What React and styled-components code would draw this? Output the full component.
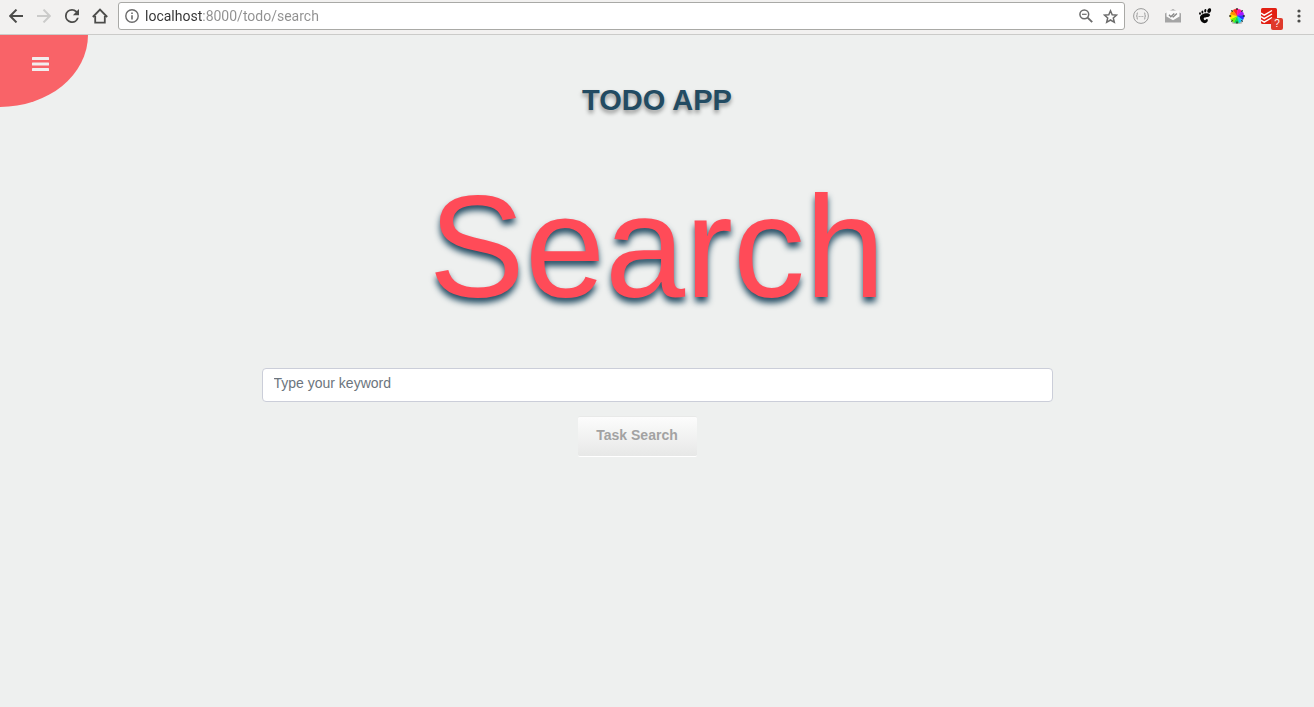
import React from "react";
import styled, { createGlobalStyle } from "styled-components";

const GlobalStyle = createGlobalStyle`
  *, *::before, *::after { box-sizing: border-box; }
  html, body { margin: 0; min-height: 100%; background: #eef0ef; }
  body { font-family: "Liberation Sans", Arial, sans-serif; font-size: 14px; color: #224b62; }
  button, input { font: inherit; margin: 0; }
  svg { display: block; flex: none; }
`;

const Toolbar = styled.header`
  display: flex;
  align-items: flex-start;
  padding: 2px 1px 4px 2px;
  background: #f2f1f0;
  border-bottom: 1px solid #cbcbc9;
`;

const ToolButton = styled.button`
  position: relative;
  display: flex;
  align-items: center;
  justify-content: center;
  flex: none;
  width: ${(p) => (p.$wide ? 32 : 28)}px;
  height: 28px;
  padding: 0;
  border: 0;
  background: none;
  color: ${(p) => (p.disabled ? "#cbcbca" : "#4c4c4a")};
`;

const AddressBar = styled.div`
  display: flex;
  align-items: center;
  flex: 1;
  min-width: 0;
  height: 28px;
  margin-left: 4px;
  padding: 0 6px;
  gap: 6px;
  border: 1px solid #a9a9a6;
  border-radius: 3px;
  background: #fff;
  color: #6b6b6b;
`;

const AddressInput = styled.input`
  flex: 1;
  min-width: 0;
  height: 24px;
  padding: 0;
  border: 0;
  outline: 0;
  font-family: Roboto, sans-serif;
  font-size: 14px;
  color: transparent;
  background: linear-gradient(to right, #333 57px, #8f8f8f 57px);
  background-clip: text;
  -webkit-background-clip: text;
`;

const AddressActions = styled.div`
  display: flex;
  gap: 10px;
`;

const Badge = styled.span`
  position: absolute;
  right: 2px;
  bottom: 0;
  width: 12px;
  height: 12px;
  border-radius: 2px;
  background: #df3a2c;
  color: #fff;
  font-size: 10px;
  line-height: 12px;
  text-align: center;
`;

const PageHeader = styled.div`
  display: grid;
  grid-template-columns: 88px 1fr 88px;
  align-items: start;
`;

const MenuButton = styled.button`
  height: 72px;
  padding: 0 8px 14px 0;
  display: flex;
  align-items: center;
  justify-content: center;
  border: 0;
  border-radius: 0 0 100% 0;
  background: #f96368;
  color: #f2eeee;
`;

const AppTitle = styled.h1`
  margin: 0;
  padding-top: 47px;
  font-size: 29px;
  line-height: 36px;
  text-align: center;
  color: #224b62;
  text-shadow: 0 3px 4px rgba(0, 0, 0, 0.4);
`;

const PageTitle = styled.h2`
  margin: 43px 0 34px;
  font-size: 144px;
  font-weight: 400;
  line-height: 173px;
  text-align: center;
  color: #ff4b58;
  text-shadow: 0 5px 6px #224b62;
`;

const SearchForm = styled.form`
  display: flex;
  flex-direction: column;
  align-items: center;
  gap: 14px;
  max-width: 791px;
  margin: 0 auto;
`;

const KeywordInput = styled.input`
  width: 100%;
  height: 34px;
  padding: 4px 11px 8px;
  border: 1px solid #cbced9;
  border-radius: 4px;
  background: #fff;
  color: #495057;
  &::placeholder { color: #6c757d; opacity: 1; }
`;

const SubmitButton = styled.button`
  min-width: 119px;
  height: 41px;
  margin-right: 40px;
  padding: 0 18px 3px;
  border: 0;
  border-top: 1px solid #e8e9e8;
  border-bottom: 1px solid #fff;
  border-radius: 2px;
  background: linear-gradient(#fcfcfc, #e7e8e7);
  color: #a2a2a2;
  font-weight: 700;
`;

const BackIcon = ({ flip }) => (
  <svg width="14" height="14" viewBox="0 0 14 14" fill="none" stroke="currentColor" strokeWidth="2">
    <path d={flip ? "M0 7H13M6.5 .6 12.8 7 6.5 13.4" : "M14 7H1M7.5 .6 1.2 7 7.5 13.4"} />
  </svg>
);

const ReloadIcon = () => (
  <svg width="14" height="14" viewBox="4 4 16 16" fill="currentColor">
    <path d="M17.65 6.35A7.96 7.96 0 0 0 12 4a8 8 0 1 0 7.73 10h-2.08A6 6 0 1 1 12 6c1.66 0 3.14.69 4.22 1.78L13 11h7V4z" />
  </svg>
);

const HomeIcon = () => (
  <svg width="16" height="16" viewBox="0 0 16 16" fill="none" stroke="currentColor" strokeWidth="1.8">
    <path d="M.8 9 8 1.6 15.2 9M3.2 8v6.6h9.6V8" />
  </svg>
);

const InfoIcon = () => (
  <svg width="14" height="14" viewBox="0 0 14 14" fill="none" stroke="currentColor" strokeWidth="1.4">
    <circle cx="7" cy="7" r="6.2" />
    <path d="M7 6.2v4.2M7 3.6v1.5" strokeWidth="1.6" />
  </svg>
);

const ZoomOutIcon = () => (
  <svg width="14" height="14" viewBox="0 0 14 14" fill="none" stroke="currentColor" strokeWidth="1.5">
    <circle cx="5.3" cy="5.3" r="4.4" />
    <path d="M3 5.3h4.6" strokeWidth="1.2" />
    <path d="m8.6 8.6 4.6 4.6" strokeWidth="1.9" />
  </svg>
);

const StarIcon = () => (
  <svg width="15" height="15" viewBox="0 0 15 15" fill="none" stroke="currentColor" strokeWidth="1.5">
    <path d="m7.5 1.8 1.7 3.9 4.4.4-3.3 2.9 1 4.3-3.8-2.3-3.8 2.3 1-4.3-3.3-2.9 4.4-.4z" />
  </svg>
);

const BracesIcon = () => (
  <svg width="16" height="16" viewBox="0 0 16 16" fill="none" stroke="#9b9b9b">
    <circle cx="8" cy="8" r="7.4" />
    <path d="M5 4.8c-1.5 0-.7 1.6-.9 2.4-.1.5-.4.8-.9.8.5 0 .8.3.9.8.2.8-.6 2.4.9 2.4M11 4.8c1.5 0 .7 1.6.9 2.4.1.5.4.8.9.8-.5 0-.8.3-.9.8-.2.8.6 2.4-.9 2.4M5.7 8.5h1M7.5 8.5h1M9.3 8.5h1" />
  </svg>
);

const MailCheckIcon = () => (
  <svg width="16" height="14" viewBox="0 0 16 14">
    <path d="M0 4.5 8 0l8 4.5V13.5H0z" fill="#a5a5a5" />
    <path d="M1.5 1.5h13v6L8 11.3 1.5 7.5z" fill="#fafafa" />
    <path d="m4 5.8 1.8 2L9.3 4.4M7.5 7.4l.8.5 3.6-3.5" fill="none" stroke="#8a8a8a" strokeWidth="1.4" />
  </svg>
);

const FootIcon = () => (
  <svg width="14" height="16" viewBox="0 0 14 16" fill="#080808">
    <ellipse cx="11.2" cy="2.6" rx="1.8" ry="2.4" transform="rotate(20 11.2 2.6)" />
    <ellipse cx="7.3" cy="2.7" rx="1.1" ry="1.8" transform="rotate(8 7.3 2.7)" />
    <ellipse cx="4.4" cy="3.9" rx="1" ry="1.5" />
    <ellipse cx="2" cy="5.5" rx=".9" ry="1.2" />
    <path d="M9.7 5.3C6 5 1.6 6.8 2 10.2c.3 2.8 2.9 5.4 5.4 4.9 2.3-.4 3.3-3.5 1.6-4-.9-.3-1.2 1.2-2.1 1.1-1.3-.2-1.7-2.1-.4-2.6 1.8-.7 5.3-.4 5.4-2.4.1-1.2-1-1.8-2.2-1.9z" />
  </svg>
);

const wheelColors = ["#ff2424", "#ff10a0", "#a514ff", "#2634ff", "#14c8ff", "#09dd55", "#75f000", "#fff000", "#ff8c00"];

const wheelPoint = (index) => {
  const angle = ((index * 40 - 125) * Math.PI) / 180;
  return `${8 + 7 * Math.cos(angle)} ${8 + 7 * Math.sin(angle)}`;
};

const ColorWheelIcon = () => (
  <svg width="16" height="16" viewBox="0 0 16 16">
    <ellipse cx="8" cy="14.8" rx="5.4" ry="1.2" fill="#b9b9b7" />
    {wheelColors.map((color, i) => (
      <path key={color} d={`M8 8 ${wheelPoint(i)}A7 7 0 0 1 ${wheelPoint(i + 1)}z`} fill={color} stroke={color} strokeWidth=".4" />
    ))}
    <path d="M8 0v2M8 13.6v2M.2 8h2M13.8 8h2M2.4 2.4l1.2 1.2M13.6 2.4l-1.2 1.2M2.4 13.6l1.2-1.2M13.6 13.6l-1.2-1.2" stroke="#222" strokeWidth="1.3" />
  </svg>
);

const TodoistIcon = () => (
  <svg width="16" height="16" viewBox="0 0 16 16">
    <rect width="16" height="16" rx="1.5" fill="#e22013" />
    <path d="m0 5.2 3.2 1.9L11 2.5M0 8.7l3.2 1.9L11 6M0 12.2l3.2 1.9L11 9.5" fill="none" stroke="#fff" strokeWidth="1.4" />
  </svg>
);

const MoreIcon = () => (
  <svg width="4" height="14" viewBox="0 0 4 14" fill="currentColor">
    <circle cx="2" cy="2" r="1.6" />
    <circle cx="2" cy="7" r="1.6" />
    <circle cx="2" cy="12" r="1.6" />
  </svg>
);

const BarsIcon = () => (
  <svg width="17" height="14" viewBox="0 0 17 14" fill="currentColor">
    <rect width="17" height="3" rx=".6" />
    <rect y="5.5" width="17" height="3" rx=".6" />
    <rect y="11" width="17" height="3" rx=".6" />
  </svg>
);

export default function App() {
  return (
    <>
      <GlobalStyle />
      <Toolbar>
        <ToolButton aria-label="Back"><BackIcon /></ToolButton>
        <ToolButton aria-label="Forward" disabled><BackIcon flip /></ToolButton>
        <ToolButton aria-label="Reload"><ReloadIcon /></ToolButton>
        <ToolButton aria-label="Home"><HomeIcon /></ToolButton>
        <AddressBar>
          <InfoIcon />
          <AddressInput aria-label="Address" defaultValue="localhost:8000/todo/search" spellCheck={false} />
          <AddressActions>
            <ZoomOutIcon />
            <StarIcon />
          </AddressActions>
        </AddressBar>
        <ToolButton $wide aria-label="JSON viewer"><BracesIcon /></ToolButton>
        <ToolButton $wide aria-label="Mail tracker"><MailCheckIcon /></ToolButton>
        <ToolButton $wide aria-label="GNOME extensions"><FootIcon /></ToolButton>
        <ToolButton $wide aria-label="Color picker"><ColorWheelIcon /></ToolButton>
        <ToolButton $wide aria-label="Todoist">
          <TodoistIcon />
          <Badge>?</Badge>
        </ToolButton>
        <ToolButton aria-label="More"><MoreIcon /></ToolButton>
      </Toolbar>
      <main>
        <PageHeader>
          <MenuButton aria-label="Open menu"><BarsIcon /></MenuButton>
          <AppTitle>TODO APP</AppTitle>
        </PageHeader>
        <PageTitle>Search</PageTitle>
        <SearchForm onSubmit={(e) => e.preventDefault()}>
          <KeywordInput type="text" aria-label="Keyword" placeholder="Type your keyword" />
          <SubmitButton type="submit">Task Search</SubmitButton>
        </SearchForm>
      </main>
    </>
  );
}
